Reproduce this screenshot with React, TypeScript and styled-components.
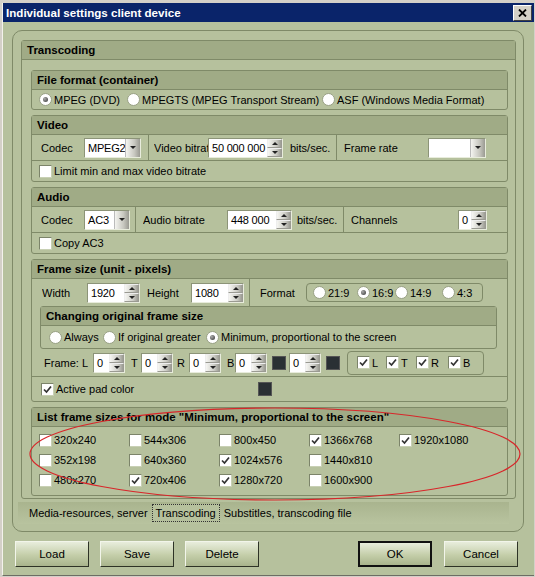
import React from "react";
import styled, { createGlobalStyle } from "styled-components";

const GlobalStyle = createGlobalStyle`
	html, body {
		margin: 0;
		padding: 0;
		background: #d4d0c8;
	}
	body {
		font-family: "Liberation Sans", Arial, sans-serif;
		font-size: 11px;
		color: #000;
	}
`;

const SAGE = "#b6c19d";
const HEAD = "#a0ab86";
const LINE = "#7f8a68";

const Page = styled.div`
	position: relative;
	width: 535px;
	height: 577px;
	padding-top: 3px;
	box-sizing: border-box;
	overflow: hidden;
`;

const Window = styled.div`
	margin-left: 2px;
	width: 531px;
	height: 572px;
	background: ${SAGE};
	border-left: 1px solid #f4f2ec;
	border-bottom: 1px solid #6d6d64;
	display: flex;
	flex-direction: column;
`;

const TitleBar = styled.div`
	height: 19px;
	background: #0a246a;
	display: flex;
	align-items: center;
	justify-content: space-between;
	padding: 0 2px 0 3px;
	color: #fff;
	font-weight: bold;
	font-size: 11.6px;
`;

const CloseButton = styled.div`
	width: 17px;
	height: 14px;
	background: #d4d0c8;
	border: 1px solid;
	border-color: #fff #404040 #404040 #fff;
	display: flex;
	align-items: center;
	justify-content: center;
`;

const Body = styled.div`
	flex: 1;
	display: flex;
	flex-direction: column;
	padding: 8px 10px 0 9px;
`;

const OuterPanel = styled.div`
	height: 502px;
	box-sizing: border-box;
	border: 1px solid ${LINE};
	border-radius: 10px;
	padding: 9px 7px 6px 8px;
	display: flex;
	flex-direction: column;
`;

const GroupBox = styled.div<{ $mx?: string }>`
	border: 1px solid ${LINE};
	border-radius: 3px;
	margin: ${(p) => p.$mx || "0"};
	display: flex;
	flex-direction: column;
`;

const GroupHeader = styled.div`
	height: 18px;
	background: ${HEAD};
	border-bottom: 1px solid ${LINE};
	display: flex;
	align-items: center;
	padding-left: 5px;
	font-weight: bold;
	font-size: 11.5px;
`;

const GroupBody = styled.div<{ $pad?: string; $gap?: number }>`
	padding: ${(p) => p.$pad || "0"};
	display: flex;
	flex-direction: column;
	gap: ${(p) => p.$gap || 0}px;
`;

const Row = styled.div<{ $h: number; $line?: boolean }>`
	height: ${(p) => p.$h}px;
	display: flex;
	align-items: center;
	border-bottom: ${(p) => (p.$line ? `1px solid ${LINE}` : "none")};
`;

const Cell = styled.div<{ $w?: number; $pl?: number; $sep?: boolean }>`
	height: 100%;
	box-sizing: border-box;
	${(p) => (p.$w ? `width: ${p.$w}px;` : "flex: 1;")}
	padding-left: ${(p) => p.$pl || 0}px;
	display: flex;
	align-items: center;
	border-right: ${(p) => (p.$sep ? `1px solid ${LINE}` : "none")};
`;

const Label = styled.span<{ $w?: number; $ml?: number }>`
	${(p) => (p.$w ? `width: ${p.$w}px; flex: none;` : "")}
	margin-left: ${(p) => p.$ml || 0}px;
	white-space: nowrap;
	overflow: hidden;
`;

const Field = styled.div<{ $w: number; $ml?: number }>`
	width: ${(p) => p.$w}px;
	height: 20px;
	margin-left: ${(p) => p.$ml || 0}px;
	flex: none;
	box-sizing: border-box;
	background: #fff;
	border: 1px solid;
	border-color: #8c9478 #e8ecdc #e8ecdc #8c9478;
	display: flex;
	align-items: stretch;
`;

const FieldText = styled.div`
	flex: 1;
	display: flex;
	align-items: center;
	padding-left: 3px;
	font-size: 11px;
	letter-spacing: -0.2px;
	overflow: hidden;
	white-space: nowrap;
`;

const ArrowBtn = styled.div`
	width: 14px;
	flex: none;
	background: linear-gradient(90deg, #f4f4f0, #c8c8c0 60%, #9a9a92);
	border-left: 1px solid #bbb;
	display: flex;
	align-items: center;
	justify-content: center;
`;

const SpinCol = styled.div`
	width: 15px;
	flex: none;
	display: flex;
	flex-direction: column;
`;

const SpinHalf = styled.div`
	flex: 1;
	background: linear-gradient(90deg, #f6f6f2, #cfcfc8 60%, #9c9c94);
	border: 1px solid #9a9a92;
	border-top-color: #eee;
	border-left-color: #eee;
	display: flex;
	align-items: center;
	justify-content: center;
`;

const Tri = styled.div<{ $up?: boolean }>`
	width: 0;
	height: 0;
	border-left: 3px solid transparent;
	border-right: 3px solid transparent;
	${(p) =>
		p.$up ? "border-bottom: 3px solid #222;" : "border-top: 3px solid #222;"}
`;

const Combo = ({ w, ml, text }: { w: number; ml?: number; text: string }) => (
	<Field $w={w} $ml={ml}>
		<FieldText>{text}</FieldText>
		<ArrowBtn>
			<Tri />
		</ArrowBtn>
	</Field>
);

const Spin = ({ w, ml, text }: { w: number; ml?: number; text: string }) => (
	<Field $w={w} $ml={ml}>
		<FieldText>{text}</FieldText>
		<SpinCol>
			<SpinHalf>
				<Tri $up />
			</SpinHalf>
			<SpinHalf>
				<Tri />
			</SpinHalf>
		</SpinCol>
	</Field>
);

const Opt = styled.label<{ $ml?: number; $w?: number }>`
	display: flex;
	align-items: center;
	gap: 2px;
	margin-left: ${(p) => p.$ml || 0}px;
	${(p) => (p.$w ? `width: ${p.$w}px; flex: none;` : "")}
	white-space: nowrap;
	font-size: 11px;
`;

const Box = styled.span`
	width: 13px;
	height: 13px;
	box-sizing: border-box;
	background: #fff;
	border: 1px solid;
	border-color: #7c846a #c8d0b4 #c8d0b4 #7c846a;
	display: inline-flex;
	align-items: center;
	justify-content: center;
	flex: none;
`;

const Circle = styled.span`
	width: 13px;
	height: 13px;
	box-sizing: border-box;
	border-radius: 50%;
	background: #fff;
	border: 1px solid #98a084;
	display: inline-flex;
	align-items: center;
	justify-content: center;
	flex: none;
`;

const Dot = styled.span`
	width: 5px;
	height: 5px;
	border-radius: 50%;
	background: radial-gradient(circle at 35% 35%, #aaa, #333);
`;

const Check = ({
	on,
	label,
	ml,
	w,
}: {
	on?: boolean;
	label: string;
	ml?: number;
	w?: number;
}) => (
	<Opt $ml={ml} $w={w}>
		<Box>
			{on && (
				<svg width="9" height="9" viewBox="0 0 9 9">
					<path d="M1 4.5 L3.5 7 L8 1.5" stroke="#333" strokeWidth="1.7" fill="none" />
				</svg>
			)}
		</Box>
		{label}
	</Opt>
);

const Radio = ({ on, label, ml, w }: { on?: boolean; label: string; ml?: number; w?: number }) => (
	<Opt $ml={ml} $w={w}>
		<Circle>{on && <Dot />}</Circle>
		{label}
	</Opt>
);

const Swatch = styled.div<{ $ml?: number; $s?: number }>`
	width: ${(p) => p.$s || 14}px;
	height: ${(p) => p.$s || 14}px;
	margin-left: ${(p) => p.$ml || 0}px;
	flex: none;
	background: #2a3034;
	border: 1px solid #555;
	box-sizing: border-box;
`;

const RoundBox = styled.div<{ $w: number; $h: number; $ml?: number }>`
	width: ${(p) => p.$w}px;
	height: ${(p) => p.$h}px;
	margin-left: ${(p) => p.$ml || 0}px;
	box-sizing: border-box;
	border: 1px solid ${LINE};
	border-radius: 4px;
	display: flex;
	align-items: center;
	flex: none;
`;

const SizeGrid = styled.div`
	display: grid;
	grid-template-columns: repeat(5, 90px);
	grid-auto-rows: 20px;
	align-items: center;
	padding: 3px 0 5px 7px;
`;

const TabStrip = styled.div`
	margin-top: 3px;
	height: 22px;
	margin-left: -3px;
	margin-right: 7px;
	background: linear-gradient(#a9b48e, #b8c39f);
	display: flex;
	align-items: center;
	padding-left: 7px;
	font-size: 11px;
`;

const Tab = styled.div<{ $active?: boolean }>`
	padding: 2px 3px;
	border: 1px dotted ${(p) => (p.$active ? "#333" : "transparent")};
	background: ${(p) => (p.$active ? SAGE : "transparent")};
`;

const ButtonRow = styled.div`
	margin-top: 9px;
	display: flex;
	padding-left: 3px;
`;

const Button = styled.button<{ $ml?: number; $def?: boolean }>`
	width: 74px;
	height: 26px;
	margin-left: ${(p) => p.$ml || 0}px;
	font-family: "Liberation Sans", Arial, sans-serif;
	font-size: 11.5px;
	color: #000;
	background: linear-gradient(#e8eddc, #c4cea9 55%, #a9b48c);
	border: ${(p) => (p.$def ? 2 : 1)}px solid;
	border-color: ${(p) =>
		p.$def ? "#111" : "#f2f5ea #2e3326 #2e3326 #f2f5ea"};
	padding: 0;
`;

const Overlay = styled.svg`
	position: absolute;
	left: 0;
	top: 0;
	pointer-events: none;
`;

const sizes: [string, boolean][] = [
	["320x240", false],
	["544x306", false],
	["800x450", false],
	["1366x768", true],
	["1920x1080", true],
	["352x198", false],
	["640x360", false],
	["1024x576", true],
	["1440x810", false],
	["", false],
	["480x270", false],
	["720x406", true],
	["1280x720", true],
	["1600x900", false],
];

function App() {
	return (
		<Page>
			<GlobalStyle />
			<Window>
				<TitleBar>
					<span>Individual settings client device</span>
					<CloseButton>
						<svg width="9" height="8" viewBox="0 0 9 8">
							<path d="M1 0.5 L8 7.5 M8 0.5 L1 7.5" stroke="#000" strokeWidth="1.8" />
						</svg>
					</CloseButton>
				</TitleBar>
				<Body>
					<OuterPanel>
						<GroupBox>
							<GroupHeader>Transcoding</GroupHeader>
							<GroupBody $pad="10px 7px 2px 9px" $gap={5}>
								<GroupBox>
									<GroupHeader>File format (container)</GroupHeader>
									<Row $h={19}>
										<Radio on label="MPEG (DVD)" ml={7} w={88} />
										<Radio label="MPEGTS (MPEG Transport Stream)" w={195} />
										<Radio label="ASF (Windows Media Format)" />
									</Row>
								</GroupBox>

								<GroupBox>
									<GroupHeader>Video</GroupHeader>
									<Row $h={25} $line>
										<Cell $w={117} $pl={9} $sep>
											<Label $w={43}>Codec</Label>
											<Combo w={57} text="MPEG2" />
										</Cell>
										<Cell $w={188} $pl={5} $sep>
											<Label $w={54}>Video bitrate</Label>
											<Spin w={75} text="50 000 000" />
											<Label $ml={7}>bits/sec.</Label>
										</Cell>
										<Cell $pl={7}>
											<Label $w={84}>Frame rate</Label>
											<Combo w={58} text="" />
										</Cell>
									</Row>
									<Row $h={20}>
										<Check label="Limit min and max video bitrate" ml={7} />
									</Row>
								</GroupBox>

								<GroupBox>
									<GroupHeader>Audio</GroupHeader>
									<Row $h={25} $line>
										<Cell $w={104} $pl={9} $sep>
											<Label $w={43}>Codec</Label>
											<Combo w={46} text="AC3" />
										</Cell>
										<Cell $w={208} $pl={7} $sep>
											<Label $w={84}>Audio bitrate</Label>
											<Spin w={65} text="448 000" />
											<Label $ml={5}>bits/sec.</Label>
										</Cell>
										<Cell $pl={7}>
											<Label $w={107}>Channels</Label>
											<Spin w={29} text="0" />
										</Cell>
									</Row>
									<Row $h={20}>
										<Check label="Copy AC3" ml={7} />
									</Row>
								</GroupBox>

								<GroupBox>
									<GroupHeader>Frame size (unit - pixels)</GroupHeader>
									<Row $h={27}>
										<Cell $w={218} $pl={10} $sep>
											<Label $w={45}>Width</Label>
											<Spin w={53} text="1920" />
											<Label $w={44} $ml={7}>
												Height
											</Label>
											<Spin w={53} text="1080" />
										</Cell>
										<Cell $pl={10}>
											<Label $w={46}>Format</Label>
											<RoundBox $w={177} $h={19}>
												<Radio label="21:9" ml={6} w={44} />
												<Radio on label="16:9" w={38} />
												<Radio label="14:9" w={47} />
												<Radio label="4:3" />
											</RoundBox>
										</Cell>
									</Row>
									<GroupBox $mx="0 10px 0 8px">
										<GroupHeader>Changing original frame size</GroupHeader>
										<Row $h={22}>
											<Radio label="Always" ml={8} w={54} />
											<Radio label="If original greater" w={103} />
											<Radio on label="Minimum, proportional to the screen" />
										</Row>
									</GroupBox>
									<Row $h={27} $line>
										<Label $ml={12} $w={49}>
											Frame: L
										</Label>
										<Spin w={32} text="0" />
										<Label $ml={6} $w={10}>
											T
										</Label>
										<Spin w={32} text="0" />
										<Label $ml={4} $w={12}>
											R
										</Label>
										<Spin w={32} text="0" />
										<Label $ml={6} $w={8}>
											B
										</Label>
										<Spin w={32} text="0" />
										<Swatch $ml={5} />
										<Spin w={32} ml={3} text="0" />
										<Swatch $ml={5} />
										<RoundBox $w={137} $h={24} $ml={7}>
											<Check on label="L" ml={9} w={29} />
											<Check on label="T" w={30} />
											<Check on label="R" w={32} />
											<Check on label="B" />
										</RoundBox>
									</Row>
									<Row $h={24}>
										<Check on label="Active pad color" ml={9} w={217} />
										<Swatch $s={14} />
									</Row>
								</GroupBox>

								<GroupBox>
									<GroupHeader>List frame sizes for mode "Minimum, proportional to the screen"</GroupHeader>
									<SizeGrid>
										{sizes.map(([s, on], i) =>
											s ? <Check key={i} on={on} label={s} /> : <span key={i} />
										)}
									</SizeGrid>
								</GroupBox>
							</GroupBody>
						</GroupBox>
						<TabStrip>
							<Tab>Media-resources, server</Tab>
							<Tab $active>Transcoding</Tab>
							<Tab>Substitles, transcoding file</Tab>
						</TabStrip>
					</OuterPanel>
					<ButtonRow>
						<Button>Load</Button>
						<Button $ml={11}>Save</Button>
						<Button $ml={11}>Delete</Button>
						<Button $ml={99} $def>
							OK
						</Button>
						<Button $ml={12}>Cancel</Button>
					</ButtonRow>
				</Body>
			</Window>
			<Overlay width="535" height="577" viewBox="0 0 535 577">
				<ellipse cx="275" cy="454" rx="245" ry="46" fill="none" stroke="#d8262a" strokeWidth="1.2" />
			</Overlay>
		</Page>
	);
}

export default App;
